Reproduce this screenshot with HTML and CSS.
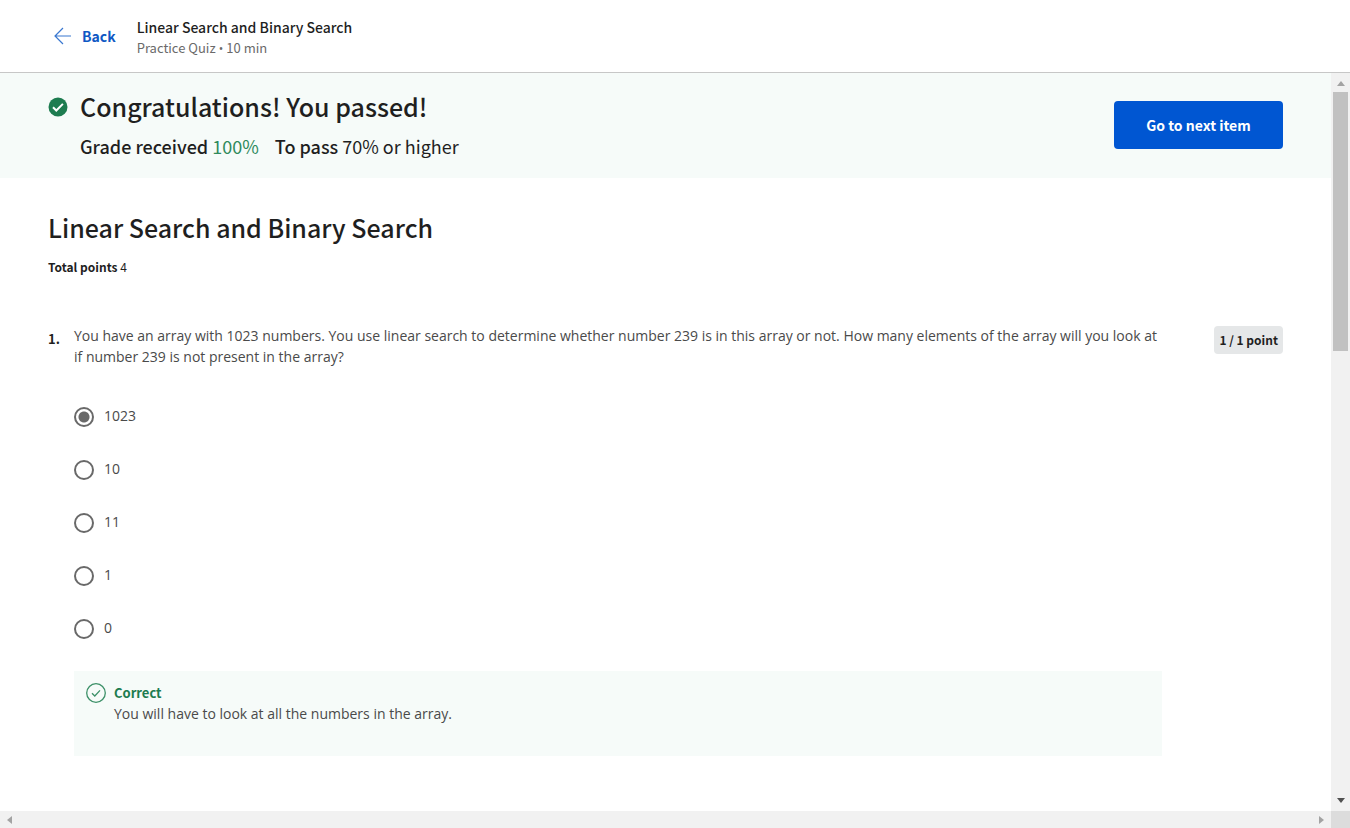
FILE: index.html
```html
<!DOCTYPE html>
<html lang="en">
<head>
<meta charset="utf-8">
<meta name="viewport" content="width=device-width, initial-scale=1">
<title>Linear Search and Binary Search</title>
<link rel="stylesheet" href="styles.css">
</head>
<body>
<header class="topbar">
  <a class="back" href="#">
    <svg class="back-icon" viewBox="0 0 18 18" aria-hidden="true"><path d="M17 9H1M9 1L1 9l8 8"/></svg>
    <span>Back</span>
  </a>
  <div class="item-info">
    <p class="item-title">Linear Search and Binary Search</p>
    <p class="item-meta">Practice Quiz<span class="dot"> • </span>10 min</p>
  </div>
</header>
<div class="viewport">
  <main class="page">
    <section class="banner">
      <svg class="banner-icon" viewBox="0 0 20 20" aria-hidden="true"><circle cx="10" cy="10" r="9.5"/><path d="M5 10.3l3.3 3.2 6.6-6.6"/></svg>
      <div class="banner-text">
        <h1 class="heading">Congratulations! You passed!</h1>
        <p class="grades">
          <span><strong>Grade received</strong> <span class="score">100%</span></span>
          <span><strong>To pass</strong> 70% or higher</span>
        </p>
      </div>
      <button class="next" type="button">Go to next item</button>
    </section>
    <section class="quiz">
      <h2 class="heading">Linear Search and Binary Search</h2>
      <p class="total"><strong>Total points</strong> 4</p>
      <div class="question">
        <span class="number">1.</span>
        <div class="question-body">
          <p class="prompt" id="prompt">You have an array with 1023 numbers. You use linear search to determine whether number 239 is in this array or not. How many elements of the array will you look at if number 239 is not present in the array?</p>
          <div class="options" role="radiogroup" aria-labelledby="prompt">
            <label class="option"><input type="radio" name="q1" checked><span>1023</span></label>
            <label class="option"><input type="radio" name="q1"><span>10</span></label>
            <label class="option"><input type="radio" name="q1"><span>11</span></label>
            <label class="option"><input type="radio" name="q1"><span>1</span></label>
            <label class="option"><input type="radio" name="q1"><span>0</span></label>
          </div>
          <div class="feedback">
            <svg class="feedback-icon" viewBox="0 0 20 20" aria-hidden="true"><circle cx="10" cy="10" r="9.3"/><path d="M6 10.2l2.8 2.8L14 7.4"/></svg>
            <div>
              <p class="verdict">Correct</p>
              <p class="explanation">You will have to look at all the numbers in the array.</p>
            </div>
          </div>
        </div>
        <span class="points">1 / 1 point</span>
      </div>
    </section>
  </main>
  <div class="scroll-v" aria-hidden="true">
    <svg class="arrow arrow-light" viewBox="0 0 8 5"><path d="M0 5L4 0l4 5z"/></svg>
    <div class="track"><div class="thumb"></div></div>
    <svg class="arrow arrow-dark" viewBox="0 0 8 5"><path d="M0 0h8L4 5z"/></svg>
  </div>
  <div class="scroll-h" aria-hidden="true">
    <svg class="arrow-side" viewBox="0 0 5 8"><path d="M5 0v8L0 4z"/></svg>
    <svg class="arrow-side" viewBox="0 0 5 8"><path d="M0 0l5 4-5 4z"/></svg>
  </div>
  <div class="corner"></div>
</div>
</body>
</html>
```
FILE: styles.css
```css
:root {
  --ui: "Noto Sans CJK SC", "Open Sans", sans-serif;
  --body: "Open Sans", "Noto Sans", sans-serif;
  --ink: #1f1f1f;
  --blue: #0056d2;
  --green: #1d7c50;
  --mint: #f6fbf9;
}

* { box-sizing: border-box; }

body {
  margin: 0;
  height: 100vh;
  display: flex;
  flex-direction: column;
  overflow: hidden;
  background: #fff;
  color: var(--ink);
  font-family: var(--ui);
  font-size: 14px;
}

h1, h2, p { margin: 0; }
strong { font-weight: 500; }

.topbar {
  display: flex;
  align-items: center;
  gap: 21px;
  height: 73px;
  padding: 0 54px;
  border-bottom: 1px solid #c7c7c7;
}

.back {
  display: flex;
  align-items: center;
  gap: 10px;
  color: #0f58c4;
  font-size: 14px;
  font-weight: 700;
  line-height: 20px;
  text-decoration: none;
}

.back-icon {
  width: 18px;
  height: 18px;
  fill: none;
  stroke: #3a78d0;
  stroke-width: 1.2;
}

.item-info { padding-top: 2px; }
.item-title { font-weight: 500; line-height: 21px; }
.item-meta { color: #6a6a6a; font-size: 13px; line-height: 20px; }
.dot { font-family: var(--body); font-size: 12px; line-height: 1; }

.viewport {
  flex: 1;
  min-height: 0;
  display: grid;
  grid-template-columns: 1fr 19px;
  grid-template-rows: 1fr 17px;
}

.page { overflow: hidden; }

.banner {
  display: flex;
  align-items: center;
  gap: 12px;
  padding: 15px 48px 17px;
  background: var(--mint);
}

.banner-icon {
  align-self: flex-start;
  width: 20px;
  height: 20px;
  margin-top: 9px;
  fill: var(--green);
}

.banner-icon path { fill: none; stroke: #fff; stroke-width: 2; }
.banner-text { flex: 1; }

.heading {
  font-size: 25px;
  font-weight: 500;
  line-height: 36px;
}

.grades {
  display: flex;
  gap: 16px;
  padding: 8px 0 1px;
  font-size: 18px;
  line-height: 28px;
}

.score { color: #2f8a5c; }

.next {
  width: 169px;
  height: 48px;
  border: 0;
  border-radius: 4px;
  background: var(--blue);
  color: #fff;
  font: 700 14px/20px var(--ui);
}

.quiz { padding: 31px 48px; }
.total { padding-top: 12px; font-size: 12px; line-height: 20px; }
.total strong { font-weight: 700; }

.question {
  display: flex;
  align-items: flex-start;
  padding-top: 48px;
}

.number {
  width: 26px;
  padding-top: 4px;
  font-size: 13px;
  font-weight: 700;
  line-height: 20px;
}

.question-body { flex: 1; }

.prompt, .option, .explanation {
  color: #4a4a4a;
  font-family: var(--body);
  font-size: 14px;
  line-height: 21px;
}

.options { padding-top: 22px; }

.option {
  display: flex;
  align-items: center;
  gap: 10px;
  height: 53px;
}

.option input {
  appearance: none;
  width: 20px;
  height: 20px;
  margin: 3px 0 0;
  border: 2px solid #696969;
  border-radius: 50%;
}

.option input:checked {
  background: radial-gradient(circle, #696969 5px, #fff 6px);
}

.feedback {
  display: flex;
  gap: 8px;
  min-height: 85px;
  margin-top: 17px;
  padding: 12px;
  background: var(--mint);
}

.feedback-icon {
  width: 20px;
  height: 20px;
  fill: none;
  stroke: #3c9068;
  stroke-width: 1.3;
}

.verdict {
  color: var(--green);
  font-size: 13px;
  font-weight: 700;
  line-height: 20px;
}

.points {
  margin: 1px 0 0 52px;
  padding: 4px 5px;
  border-radius: 4px;
  background: #e5e7e8;
  font-size: 12px;
  font-weight: 700;
  line-height: 20px;
}

.scroll-v {
  display: flex;
  flex-direction: column;
  align-items: center;
  padding: 8px 0;
  background: #f1f1f1;
}

.track { flex: 1; width: 15px; padding: 6px 0; }
.thumb { height: 37%; background: #c1c1c1; }
.arrow { width: 8px; height: 5px; }
.arrow-light, .arrow-side { fill: #a3a3a3; }
.arrow-dark { fill: #505050; }

.scroll-h {
  display: flex;
  align-items: center;
  justify-content: space-between;
  padding: 0 7px;
  background: #f1f1f1;
}

.arrow-side { width: 5px; height: 8px; }
.corner { background: #dcdcdc; }
```
